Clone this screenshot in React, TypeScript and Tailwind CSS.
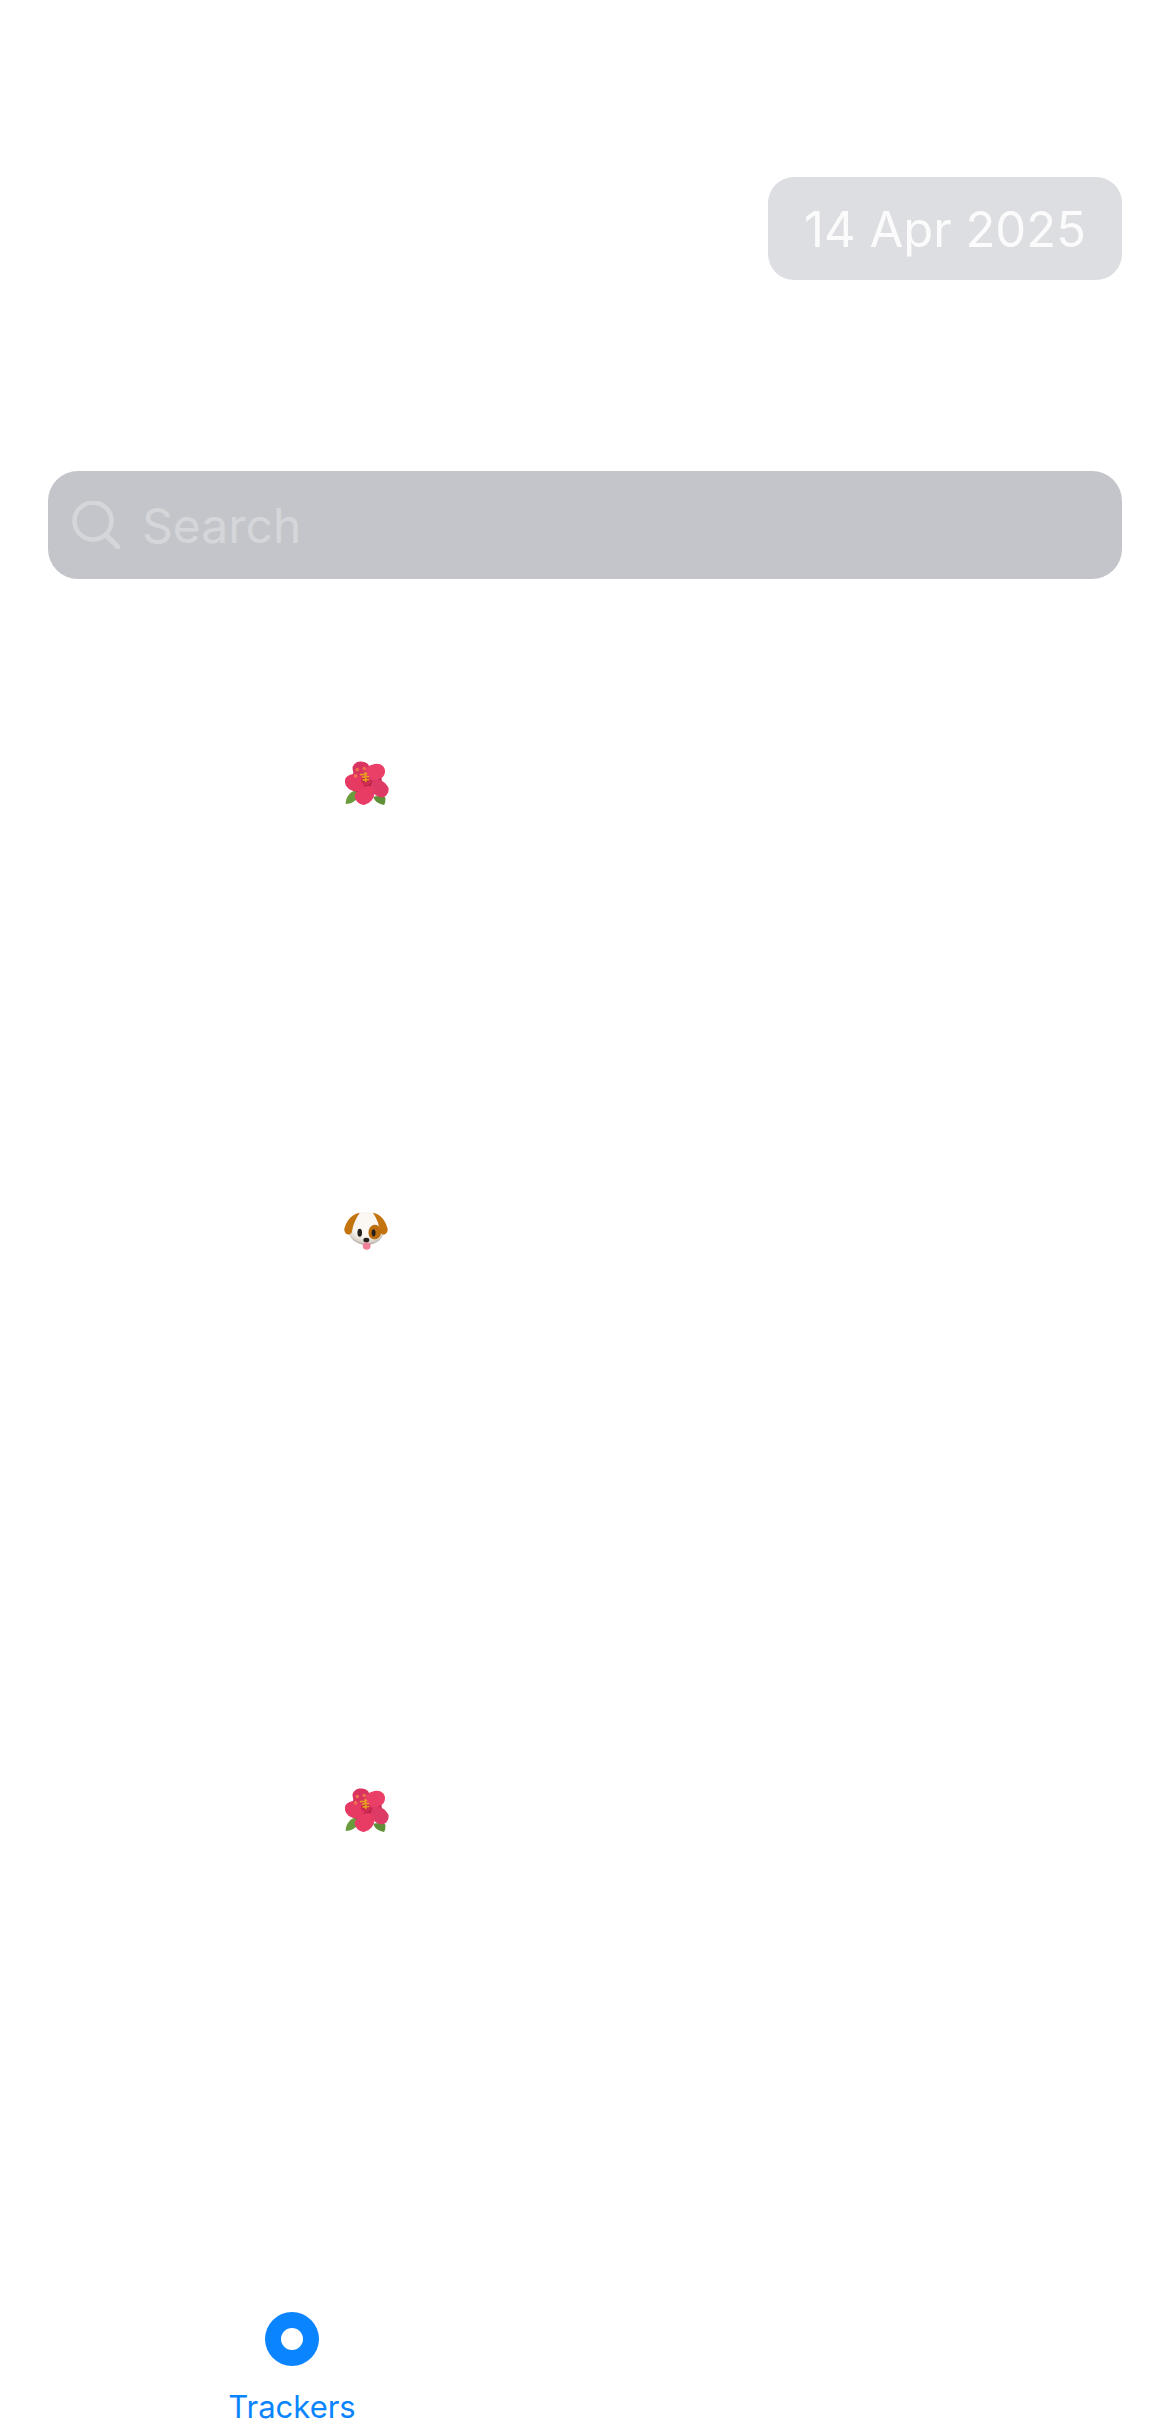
function Hibiscus({ id }: { id: string }) {
  const fill = `url(#${id})`;
  return (
    <svg width="44" height="44" viewBox="75 62 133 133">
      <defs>
        <radialGradient id={id} cx="0.45" cy="0.35" r="0.75">
          <stop offset="0" stopColor="#a81a3e" />
          <stop offset="0.5" stopColor="#cf2a52" />
          <stop offset="1" stopColor="#d92f58" />
        </radialGradient>
      </defs>
      {/* leaves */}
      <path d="M108 150 C88 158 77 172 77 192 C94 192 110 184 118 165 Z" fill="#6a9c3e" />
      <path d="M160 170 C175 166 188 168 197 172 C198 182 196 190 193 195 C178 192 166 186 160 170 Z" fill="#5f9038" />
      {/* petals */}
      <ellipse cx="140" cy="122" rx="46" ry="46" fill="#b92347" />
      <path d="M100 80 C106 64 132 60 144 74 C152 90 150 112 134 126 C118 124 98 102 100 80 Z" fill="#d93460" stroke="#d93460" strokeWidth="4" />
      <path d="M142 86 C152 74 176 68 188 80 C198 92 192 108 178 114 C166 120 152 120 140 112 Z" fill="#ea4068" stroke="#ea4068" strokeWidth="6" strokeLinejoin="round" />
      <path d="M96 104 C112 100 126 114 132 134 C130 148 112 156 98 150 C82 146 74 130 78 116 C82 108 88 106 96 104 Z" fill="#e63a63" stroke="#e63a63" strokeWidth="4" strokeLinejoin="round" />
      <path d="M160 122 C176 116 196 126 204 142 C208 156 198 170 184 170 C170 168 158 156 154 140 Z" fill="#dd3b65" stroke="#dd3b65" strokeWidth="4" strokeLinejoin="round" />
      <path d="M130 144 C146 134 162 142 162 158 C162 174 150 190 132 193 C118 192 106 180 106 166 C110 156 120 150 130 144 Z" fill="#e93c65" stroke="#e93c65" strokeWidth="4" strokeLinejoin="round" />
      <ellipse cx="138" cy="122" rx="15" ry="13" fill={fill} />
      {/* stamen */}
      <circle cx="112" cy="88" r="5.5" fill="#ee6f4d" />
      <circle cx="133" cy="85" r="5.5" fill="#ee6f4d" />
      <circle cx="107" cy="107" r="5.5" fill="#ee6f4d" />
      <path d="M122 103 L140 101 M128 111 L146 109 M130 119 L146 118 M136 97 L138 124" stroke="#e8a020" strokeWidth="5" strokeLinecap="round" />
    </svg>
  );
}

function Puppy() {
  return (
    <svg width="44" height="38" viewBox="73 65 132 115">
      <defs>
        <radialGradient id="puppy-head" cx="0.5" cy="0.38" r="0.62">
          <stop offset="0.55" stopColor="#fbf8f4" />
          <stop offset="0.85" stopColor="#ddd6ce" />
          <stop offset="1" stopColor="#b3aaa2" />
        </radialGradient>
      </defs>
      <ellipse cx="140" cy="115" rx="56" ry="50" fill="url(#puppy-head)" />
      <path d="M120 67 C96 70 78 94 73 118 C75 136 90 137 96 126 C99 105 108 85 120 67 Z" fill="#c4740f" />
      <path d="M160 67 C184 70 200 94 205 118 C203 136 188 137 182 126 C179 105 172 85 160 67 Z" fill="#c4740f" />
      <path d="M148 118 C156 98 178 100 184 120 C188 140 172 150 160 147 C148 144 144 130 148 118 Z" fill="#bd6f10" />
      <ellipse cx="120" cy="128" rx="7" ry="12" fill="#26201c" />
      <ellipse cx="162" cy="128" rx="6" ry="11" fill="#26201c" />
      <ellipse cx="140" cy="150" rx="9" ry="7" fill="#26201c" />
      <ellipse cx="141" cy="168" rx="12" ry="11" fill="#ee8098" />
    </svg>
  );
}

export default function App() {
  return (
    <div className="flex min-h-[2430px] flex-col bg-white font-['Inter',sans-serif]">
      <div className="flex justify-end pr-[48px] pt-[177px]">
        <div className="flex h-[103px] w-[354px] items-center justify-center rounded-[26px] bg-[#dddee1] pt-[3px] text-[49px] text-[#fbfbfc]">
          14 Apr 2025
        </div>
      </div>

      <div className="mx-[48px] mt-[191px] flex h-[108px] items-center rounded-[30px] bg-[#c4c5ca] pl-[24px]">
        <svg width="48" height="48" viewBox="0 0 48 48" fill="none" stroke="#d5d6da" strokeWidth="4.5" strokeLinecap="round">
          <circle cx="21" cy="20" r="18.5" />
          <path d="M34 34 L46 46" strokeWidth="5" />
        </svg>
        <span className="ml-[22px] pt-[2px] text-[48px] text-[#d5d6da]">Search</span>
      </div>

      <div className="ml-[345px] mt-[182px]"><Hibiscus id="petal-a" /></div>
      <div className="ml-[344px] mt-[407px]"><Puppy /></div>
      <div className="ml-[345px] mt-[538px]"><Hibiscus id="petal-b" /></div>

      <div className="mt-auto flex w-[400px] flex-col items-center pb-[5px] pl-[184px]">
        <div className="flex h-[54px] w-[54px] items-center justify-center rounded-full bg-[#0a84ff]">
          <div className="h-[22px] w-[22px] rounded-full bg-white" />
        </div>
        <span className="mt-[23px] text-[31px] leading-[36px] text-[#0a84ff]">Trackers</span>
      </div>
    </div>
  );
}
